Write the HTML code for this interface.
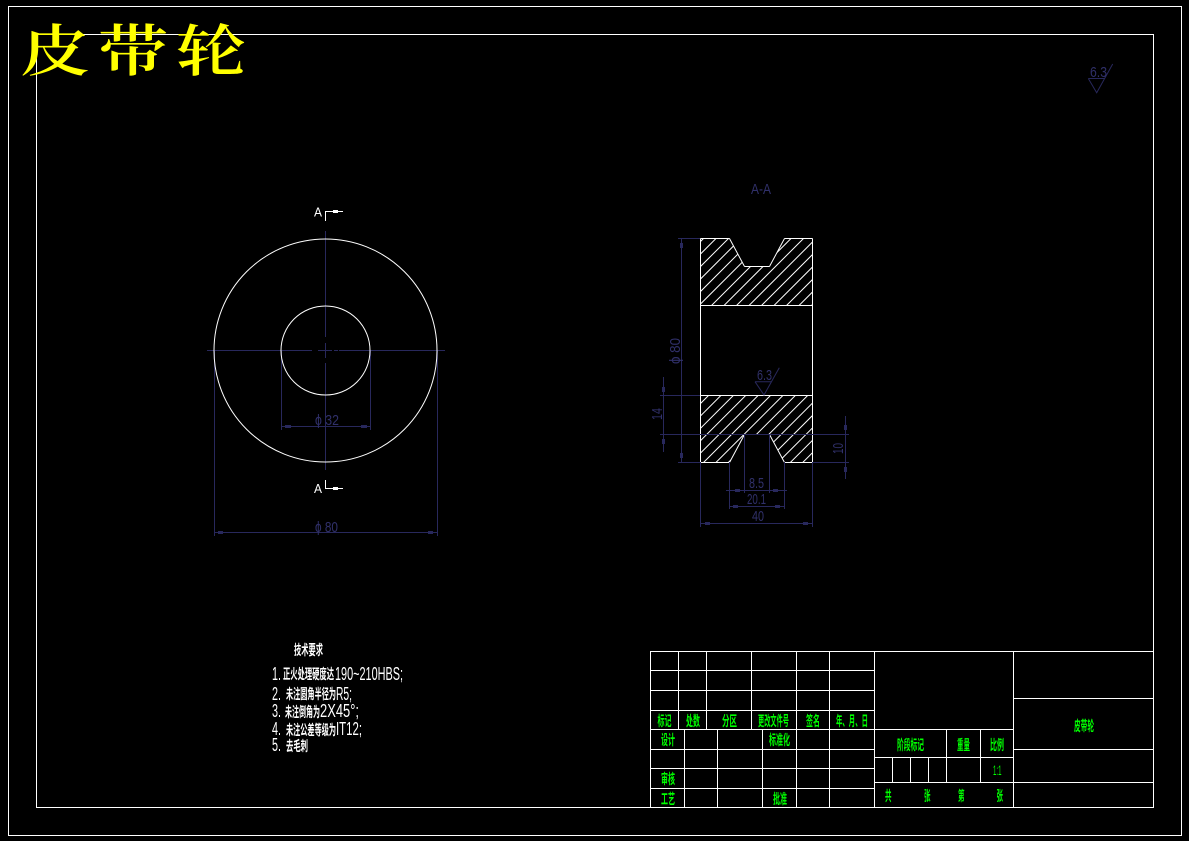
<!DOCTYPE html>
<html><head><meta charset="utf-8"><title>皮带轮</title>
<style>
html,body{margin:0;padding:0;background:#000;width:1189px;height:841px;overflow:hidden}
svg{display:block}
.l{stroke:#fff;stroke-width:1;fill:none;shape-rendering:crispEdges}
.c{stroke:#fff;stroke-width:1;fill:none}
.d{stroke:#28285c;stroke-width:1;fill:none;shape-rendering:crispEdges}
.a{fill:#28285c;shape-rendering:crispEdges}
.h{stroke:#fff;stroke-width:1;fill:none}
text{font-family:"Liberation Sans","Noto Sans CJK SC",sans-serif}
.dt{fill:#30306a;font-size:15px;font-weight:400}
.w{fill:#fff;font-size:18px}
.wc{fill:#fff;font-size:14px;font-weight:700;font-family:"Noto Sans CJK SC",sans-serif}
.g{fill:#0f0;font-size:14px;font-weight:700;font-family:"Noto Sans CJK SC",sans-serif}
.y{fill:#ff0;font-size:70px;font-weight:600;font-family:"Noto Serif CJK SC",serif}
</style></head><body>
<svg width="1189" height="841" viewBox="0 0 1189 841" xmlns="http://www.w3.org/2000/svg">
<defs>
<clipPath id="cu"><path d="M700.5 238.5H729.5L744.5 266.5H769.5L784.5 238.5H812.5V305.5H700.5Z"/></clipPath>
<clipPath id="cl"><path d="M700.5 395.5H812.5V462.5H784.5L769.5 434.5H744.5L729.5 462.5H700.5Z"/></clipPath>
</defs>
<rect width="1189" height="841" fill="#000"/>
<rect class="l" x="8.5" y="6.5" width="1173" height="829"/>
<rect class="l" x="36.5" y="34.5" width="1117" height="773"/>

<!-- centre lines & dims, left view -->
<path class="d" d="M207 350.5H312M318 350.5H332M334 350.5H338M339 350.5H445M325.5 231V337M325.5 343V358M325.5 363V470"/>
<path class="d" d="M281.5 350V430M370.5 350V430M281.5 426.5H370.5M214.5 350V536M437.5 350V536M214.5 532.5H437.5"/>
<rect class="a" x="285" y="425" width="6" height="3"/><rect class="a" x="361" y="425" width="6" height="3"/>
<rect class="a" x="218" y="531" width="5" height="3"/><rect class="a" x="428" y="531" width="5" height="3"/>
<circle class="c" cx="325.5" cy="350.5" r="111.5"/>
<circle class="c" cx="325.5" cy="350.5" r="44.5"/>
<text class="dt" x="315" y="425" textLength="24" lengthAdjust="spacingAndGlyphs">ϕ 32</text>
<text class="dt" x="315" y="532" textLength="23" lengthAdjust="spacingAndGlyphs">ϕ 80</text>

<!-- section markers -->
<path class="l" d="M325.5 221V211.5H343M325.5 480V488.5H343"/>
<rect x="333" y="210" width="5" height="3" fill="#fff"/><rect x="333" y="487" width="5" height="3" fill="#fff"/>
<text class="w" style="font-size:13px" x="314" y="216.500" textLength="8" lengthAdjust="spacingAndGlyphs">A</text>
<text class="w" style="font-size:13px" x="314" y="493" textLength="8" lengthAdjust="spacingAndGlyphs">A</text>

<!-- section view hatching -->
<g clip-path="url(#cu)" class="h">
<path d="M600 342L820 122M600 354.500L820 134.500M600 367L820 147M600 379.500L820 159.500M600 392L820 172M600 404.500L820 184.500M600 417L820 197M600 429.500L820 209.500M600 442L820 222M600 454.500L820 234.500M600 467L820 247M600 479.500L820 259.500M600 492L820 272M600 504.500L820 284.500M600 517L820 297"/>
</g>
<g clip-path="url(#cl)" class="h">
<path d="M600 504L820 284M600 516.400L820 296.400M600 528.800L820 308.800M600 541.200L820 321.200M600 553.600L820 333.600M600 566L820 346M600 578.400L820 358.400M600 590.800L820 370.800M600 603.200L820 383.200M600 615.600L820 395.600M600 628L820 408M600 640.400L820 420.400M600 652.800L820 432.800M600 665.200L820 445.200"/>
</g>
<path class="c" d="M744.500 266.500L729.500 238.500M769.500 266.500L784.500 238.500M744.500 434.500L729.500 462.500M769.500 434.500L784.500 462.500"/>
<path class="l" d="M700.500 238.500H729.500M784.500 238.500H812.500M744.500 266.500H769.500M700.500 238.500V462.500M812.500 238.500V462.500M700.500 305.500H812.500M700.500 395.500H812.500M744.500 434.500H769.500M700.500 462.500H729.500M784.500 462.500H812.500"/>

<!-- section dims -->
<path class="d" d="M678 238.500H700M681.500 238V462M678 462.500H700M663.500 377V452M660 395.500H700M660 434.500H849M845.500 416V479M812 462.500H849M700.500 462V527M812.500 462V527M700.500 523.500H812.500M729.500 462V509M784.500 462V509M729.500 506.500H784.500M744.500 434V493M769.500 434V493M726 490.500H787"/>
<rect class="a" x="680" y="243" width="3" height="5"/><rect class="a" x="680" y="453" width="3" height="5"/>
<rect class="a" x="662" y="387" width="3" height="5"/><rect class="a" x="662" y="439" width="3" height="5"/>
<rect class="a" x="844" y="425" width="3" height="5"/><rect class="a" x="844" y="467" width="3" height="5"/>
<rect class="a" x="705" y="522" width="5" height="3"/><rect class="a" x="803" y="522" width="5" height="3"/>
<rect class="a" x="733" y="505" width="5" height="3"/><rect class="a" x="775" y="505" width="5" height="3"/>
<rect class="a" x="735" y="489" width="5" height="3"/><rect class="a" x="773" y="489" width="5" height="3"/>
<text class="dt" x="751" y="194" textLength="20" lengthAdjust="spacingAndGlyphs">A-A</text>
<text class="dt" x="749" y="488" textLength="15" lengthAdjust="spacingAndGlyphs">8.5</text>
<text class="dt" x="747" y="504" textLength="19" lengthAdjust="spacingAndGlyphs">20.1</text>
<text class="dt" x="752" y="521" textLength="12" lengthAdjust="spacingAndGlyphs">40</text>
<text class="dt" transform="translate(680 364) rotate(-90)" textLength="26" lengthAdjust="spacingAndGlyphs">ϕ 80</text>
<text class="dt" transform="translate(662 420) rotate(-90)" textLength="12" lengthAdjust="spacingAndGlyphs">14</text>
<text class="dt" transform="translate(843 454) rotate(-90)" textLength="11" lengthAdjust="spacingAndGlyphs">10</text>

<!-- roughness -->
<path class="d" style="shape-rendering:auto" d="M755 381.700H771.700M755 381.700L764 395L779.300 367.700"/>
<text class="dt" x="757" y="380" textLength="15" lengthAdjust="spacingAndGlyphs">6.3</text>
<path class="d" style="shape-rendering:auto" d="M1088.300 78.500H1105M1088.300 78.500L1096.700 92.700L1112.700 64"/>
<text class="dt" x="1090" y="77" textLength="17" lengthAdjust="spacingAndGlyphs">6.3</text>

<!-- technical notes -->
<text class="wc" x="294" y="655" textLength="29" lengthAdjust="spacingAndGlyphs">技术要求</text>
<text class="w" x="272" y="680" textLength="9" lengthAdjust="spacingAndGlyphs">1.</text>
<text class="wc" x="283" y="679" textLength="51" lengthAdjust="spacingAndGlyphs">正火处理硬度达</text>
<text class="w" x="335" y="680" textLength="68" lengthAdjust="spacingAndGlyphs">190~210HBS;</text>
<text class="w" x="272" y="700" textLength="9" lengthAdjust="spacingAndGlyphs">2.</text>
<text class="wc" x="286" y="699" textLength="50" lengthAdjust="spacingAndGlyphs">未注圆角半径为</text>
<text class="w" x="336" y="700" textLength="16" lengthAdjust="spacingAndGlyphs">R5;</text>
<text class="w" x="272" y="717" textLength="9" lengthAdjust="spacingAndGlyphs">3.</text>
<text class="wc" x="285" y="717" textLength="35" lengthAdjust="spacingAndGlyphs">未注倒角为</text>
<text class="w" x="320" y="717" textLength="39" lengthAdjust="spacingAndGlyphs">2X45°;</text>
<text class="w" x="272" y="735" textLength="9" lengthAdjust="spacingAndGlyphs">4.</text>
<text class="wc" x="286" y="735" textLength="50" lengthAdjust="spacingAndGlyphs">未注公差等级为</text>
<text class="w" x="336" y="735" textLength="26" lengthAdjust="spacingAndGlyphs">IT12;</text>
<text class="w" x="272" y="751" textLength="9" lengthAdjust="spacingAndGlyphs">5.</text>
<text class="wc" x="286" y="751" textLength="22" lengthAdjust="spacingAndGlyphs">去毛刺</text>

<!-- title block -->
<path class="l" d="M650.500 651.500H1153.500V807.500H650.500ZM650.500 670.500H874.500M650.500 690.500H874.500M650.500 710.500H874.500M650.500 729.500H1013.500M650.500 749.500H874.500M650.500 768.500H874.500M650.500 788.500H874.500
M678.500 651.500V729.500M706.500 651.500V729.500M751.500 651.500V729.500M796.500 651.500V807.500M829.500 651.500V807.500M874.500 651.500V807.500
M684.500 729.500V807.500M717.500 729.500V807.500M762.500 729.500V807.500
M874.500 757.500H1013.500M874.500 782.500H1013.500M946.500 729.500V782.500M980.500 729.500V782.500M892.500 757.500V782.500M910.500 757.500V782.500M928.500 757.500V782.500
M1013.500 651.500V807.500M1013.500 698.500H1153.500M1013.500 749.500H1153.500M1013.500 782.500H1153.500"/>
<text class="g" x="657.500" y="726" textLength="14" lengthAdjust="spacingAndGlyphs">标记</text>
<text class="g" x="686" y="726" textLength="14" lengthAdjust="spacingAndGlyphs">处数</text>
<text class="g" x="722" y="726" textLength="15" lengthAdjust="spacingAndGlyphs">分区</text>
<text class="g" x="758" y="726" textLength="31" lengthAdjust="spacingAndGlyphs">更改文件号</text>
<text class="g" x="806" y="726" textLength="14" lengthAdjust="spacingAndGlyphs">签名</text>
<text class="g" x="836" y="726" textLength="32" lengthAdjust="spacingAndGlyphs">年、月、日</text>
<text class="g" x="661" y="745" textLength="14" lengthAdjust="spacingAndGlyphs">设计</text>
<text class="g" x="769" y="745" textLength="21" lengthAdjust="spacingAndGlyphs">标准化</text>
<text class="g" x="661" y="784" textLength="14" lengthAdjust="spacingAndGlyphs">审核</text>
<text class="g" x="661" y="804" textLength="14" lengthAdjust="spacingAndGlyphs">工艺</text>
<text class="g" x="773" y="804" textLength="14" lengthAdjust="spacingAndGlyphs">批准</text>
<text class="g" x="897" y="750" textLength="27" lengthAdjust="spacingAndGlyphs">阶段标记</text>
<text class="g" x="957" y="750" textLength="13" lengthAdjust="spacingAndGlyphs">重量</text>
<text class="g" x="990" y="750" textLength="14" lengthAdjust="spacingAndGlyphs">比例</text>
<text fill="#0f0" style="font-size:14px" x="993" y="775" textLength="8.500" lengthAdjust="spacingAndGlyphs">1:1</text>
<text class="g" x="885" y="801" textLength="6.500" lengthAdjust="spacingAndGlyphs">共</text>
<text class="g" x="924" y="801" textLength="6.500" lengthAdjust="spacingAndGlyphs">张</text>
<text class="g" x="958" y="801" textLength="6.500" lengthAdjust="spacingAndGlyphs">第</text>
<text class="g" x="996.500" y="801" textLength="6.500" lengthAdjust="spacingAndGlyphs">张</text>
<text class="g" x="1074" y="731" textLength="20" lengthAdjust="spacingAndGlyphs">皮带轮</text>

<!-- big title -->
<text class="y" transform="translate(20 71) scale(1 .8)" x="0" y="0">皮</text>
<text class="y" transform="translate(98 71) scale(1 .8)" x="0" y="0">带</text>
<text class="y" transform="translate(176 71) scale(1 .8)" x="0" y="0">轮</text>
</svg>
</body></html>
